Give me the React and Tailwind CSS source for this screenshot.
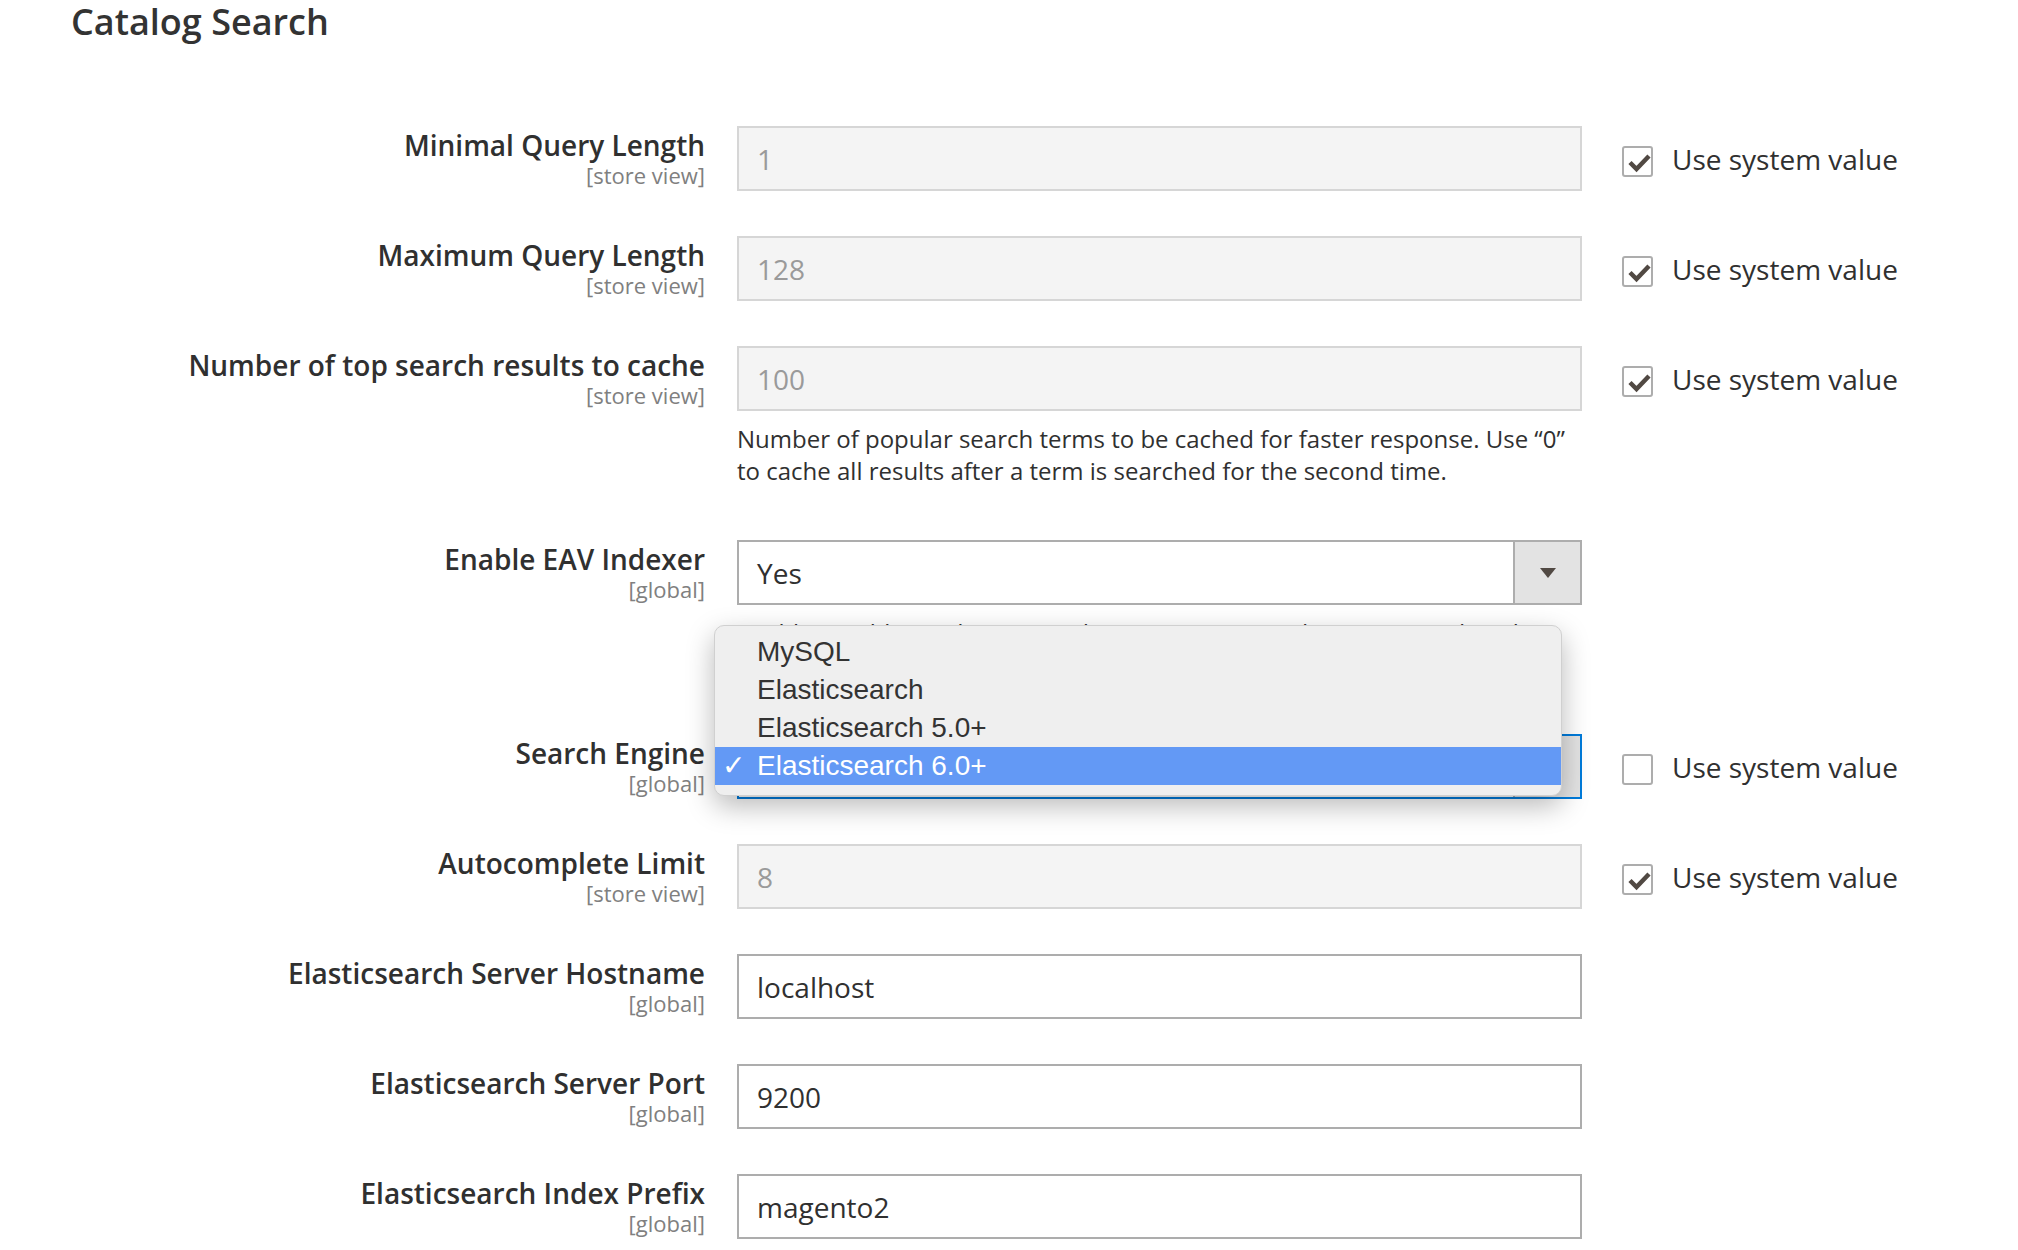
import React from "react";

const CheckIcon = () => (
  <svg width="31" height="31" viewBox="0 0 31 31" className="absolute left-0 top-0">
    <polyline points="6,14.5 12.5,21 25,8" fill="none" stroke="#514943" strokeWidth="4.5" />
  </svg>
);

// ================= SMALL COMPONENTS =================
const SystemValue = ({ checked }) => (
  <div className="ml-[40px] flex h-[65px] items-center">
    <div className="relative mt-[6px] h-[31px] w-[31px] shrink-0 rounded-[3px] border-2 border-[#adadad] bg-white">
      {checked && <CheckIcon />}
    </div>
    <span className="ml-[19px] text-[28px] leading-[34px] text-[#303030]">Use system value</span>
  </div>
);

const TextInput = ({ value, disabled }) => (
  <div
    className={`flex h-[65px] items-center border-2 pl-[18px] text-[28px] ${
      disabled
        ? "border-[#d6d6d6] bg-[#f4f4f4] text-[#9a9a9a]"
        : "border-[#adadad] bg-white text-[#303030]"
    }`}
  >
    {value}
  </div>
);

const Select = ({ value, focused }) => (
  <div
    className={`flex h-[65px] border-2 bg-white ${
      focused ? "border-[#007bdb]" : "border-[#adadad]"
    }`}
  >
    <div className="flex flex-1 items-center pl-[18px] text-[28px] text-[#303030]">{value}</div>
    <div className="flex w-[67px] items-center justify-center border-l-2 border-[#adadad] bg-[#e3e3e3]">
      <svg width="16" height="10" viewBox="0 0 16 10">
        <polygon points="0,0 16,0 8,10" fill="#514943" />
      </svg>
    </div>
  </div>
);

const Field = ({ label, scope, children, system, help }) => (
  <div className="flex">
    <div className="w-[705px] shrink-0 pt-[2px] text-right">
      <div className="text-[28px] font-semibold leading-[34px] text-[#303030]">{label}</div>
      <div className="text-[22px] leading-[26px] text-[#808080]">[{scope}]</div>
    </div>
    <div className="relative ml-[32px] w-[845px] shrink-0">
      {children}
      {help && (
        <p className="mb-[8px] mt-[12px] text-[24px] leading-[32px] text-[#303030]">{help}</p>
      )}
    </div>
    {system !== undefined && <SystemValue checked={system} />}
  </div>
);

const engines = ["MySQL", "Elasticsearch", "Elasticsearch 5.0+", "Elasticsearch 6.0+"];

const EngineMenu = () => (
  <div className="absolute left-[-23px] top-[-109px] z-10 w-[848px] rounded-[10px] border border-[#d0d0d0] bg-[#efefef] pb-[10px] pt-[7px] font-['Liberation_Sans',sans-serif] shadow-[0_10px_28px_rgba(0,0,0,0.28)]">
    {engines.map((e) => {
      const active = e === "Elasticsearch 6.0+";
      return (
        <div
          key={e}
          className={`relative flex h-[38px] items-center pl-[42px] text-[28px] ${
            active ? "bg-[#6399f5] text-white" : "text-[#333333]"
          }`}
        >
          {active && (
            <span className="absolute left-[7px] top-[1px] font-['DejaVu_Sans',sans-serif] text-[28px] font-bold leading-[36px] text-white">
              ✓
            </span>
          )}
          {e}
        </div>
      );
    })}
  </div>
);

export default function App() {
  return (
    <div className="min-h-screen bg-white font-['Open_Sans',sans-serif] text-[#303030]">
      {/* ================= HEADER ================= */}
      <h1 className="pl-[71px] pt-[4px] text-[36px] font-semibold leading-[36px] text-[#333333]">
        Catalog Search
      </h1>

      {/* ================= FIELDS ================= */}
      <div className="mt-[86px] flex flex-col gap-[45px] pb-[40px]">
        <Field label="Minimal Query Length" scope="store view" system={true}>
          <TextInput value="1" disabled />
        </Field>
        <Field label="Maximum Query Length" scope="store view" system={true}>
          <TextInput value="128" disabled />
        </Field>
        <Field
          label="Number of top search results to cache"
          scope="store view"
          system={true}
          help="Number of popular search terms to be cached for faster response. Use “0” to cache all results after a term is searched for the second time."
        >
          <TextInput value="100" disabled />
        </Field>
        <Field
          label="Enable EAV Indexer"
          scope="global"
          help="Enable/Disable Product EAV indexer to improve indexation speed. Make sure that indexer is not used by 3rd party extensions."
        >
          <Select value="Yes" />
        </Field>
        <Field label="Search Engine" scope="global" system={false}>
          <Select value="" focused />
          <EngineMenu />
        </Field>
        <Field label="Autocomplete Limit" scope="store view" system={true}>
          <TextInput value="8" disabled />
        </Field>
        <Field label="Elasticsearch Server Hostname" scope="global">
          <TextInput value="localhost" />
        </Field>
        <Field label="Elasticsearch Server Port" scope="global">
          <TextInput value="9200" />
        </Field>
        <Field label="Elasticsearch Index Prefix" scope="global">
          <TextInput value="magento2" />
        </Field>
      </div>
    </div>
  );
}
